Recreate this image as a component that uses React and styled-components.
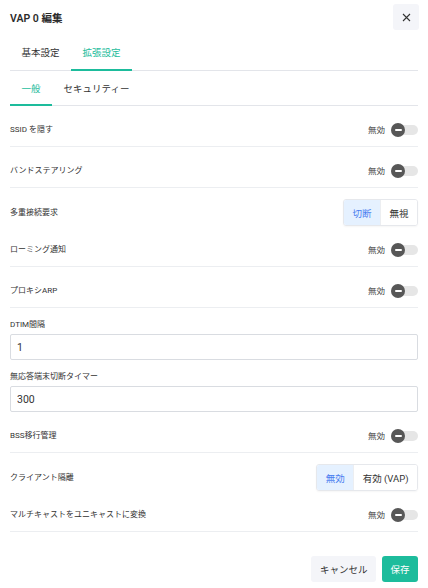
import React from "react";
import styled, { createGlobalStyle } from "styled-components";

const GlobalStyle = createGlobalStyle`
  html, body {
    margin: 0;
    padding: 0;
    background: #fff;
  }
  body {
    font-family: Roboto, "Noto Sans CJK JP", sans-serif;
    color: #333;
  }
  * {
    box-sizing: border-box;
  }
`;

const teal = "#1dbc9c";

const Panel = styled.div`
  width: 428px;
  padding: 0 10px;
`;

const Header = styled.div`
  height: 34px;
  display: flex;
  align-items: center;
  justify-content: space-between;
`;

const Title = styled.h2`
  margin: 0;
  font-size: 10.5px;
  font-weight: 600;
  color: #2b2b2b;
`;

const CloseButton = styled.button`
  width: 26px;
  height: 26px;
  margin-right: -1px;
  border: none;
  border-radius: 3px;
  background: #f4f5f9;
  display: flex;
  align-items: center;
  justify-content: center;
  padding: 0;
  cursor: pointer;
`;

const TabBar = styled.div`
  display: flex;
  border-bottom: 1px solid #e3e5ea;
`;

const Tab = styled.div`
  height: ${(p) => p.$height}px;
  padding: 0 11.5px;
  display: flex;
  align-items: center;
  font-size: 9.5px;
  color: ${(p) => (p.$active ? teal : "#333")};
  border-bottom: 2px solid ${(p) => (p.$active ? teal : "transparent")};
  margin-bottom: -1px;
  cursor: pointer;
`;

const Row = styled.div`
  display: flex;
  align-items: center;
  justify-content: space-between;
  height: ${(p) => (p.$plain ? "38px" : "41px")};
  padding: ${(p) => (p.$plain ? "11px 0 0" : "13px 0 5px")};
  border-bottom: ${(p) => (p.$plain ? "none" : "1px solid #eceef1")};
`;

const Label = styled.span`
  font-size: 8px;
  line-height: 12px;
  color: #333;
`;

const SwitchWrap = styled.div`
  display: flex;
  align-items: center;
  gap: 6px;
`;

const Status = styled.span`
  font-size: 8.5px;
  line-height: 12px;
  color: #444;
`;

const Track = styled.div`
  position: relative;
  width: 27px;
  height: 10px;
  border-radius: 5px;
  background: #e6e6e6;
`;

const Knob = styled.div`
  position: absolute;
  left: 0;
  top: -2px;
  width: 14px;
  height: 14px;
  border-radius: 50%;
  background: #575757;
  display: flex;
  align-items: center;
  justify-content: center;

  &::after {
    content: "";
    width: 7px;
    height: 2px;
    background: #fff;
    border-radius: 1px;
  }
`;

const Segmented = styled.div`
  display: inline-flex;
  height: 27px;
  border: 1px solid #e6e8ec;
  border-radius: 3px;
  overflow: hidden;
  box-shadow: 0 1px 2px rgba(0, 0, 0, 0.04);
`;

const SegItem = styled.div`
  padding: 0 8.5px;
  display: flex;
  align-items: center;
  font-size: 9.5px;
  color: ${(p) => (p.$active ? "#4a7ef0" : "#333")};
  background: ${(p) => (p.$active ? "#e5f1ff" : "#fff")};
  & + & {
    border-left: 1px solid #eceef1;
  }
`;

const Field = styled.div`
  padding-top: 10px;
`;

const FieldLabel = styled.div`
  font-size: 8px;
  line-height: 14px;
  margin-bottom: 2px;
  color: #333;
`;

const Input = styled.input`
  display: block;
  width: 100%;
  height: 26px;
  border: 1px solid #d9dce1;
  border-radius: 2px;
  padding: 0 6px;
  font-family: Roboto, sans-serif;
  font-size: 10.5px;
  color: #333;
  outline: none;
`;

const Footer = styled.div`
  display: flex;
  justify-content: flex-end;
  gap: 6px;
  padding-top: 24px;
`;

const Button = styled.button`
  height: 26px;
  padding: 0 8.5px;
  border: none;
  border-radius: 3px;
  font-family: Roboto, "Noto Sans CJK JP", sans-serif;
  font-size: 9.5px;
  color: ${(p) => (p.$primary ? "#fff" : "#333")};
  background: ${(p) => (p.$primary ? teal : "#f4f5f9")};
  cursor: pointer;
`;

function Toggle() {
  return (
    <SwitchWrap>
      <Status>無効</Status>
      <Track>
        <Knob />
      </Track>
    </SwitchWrap>
  );
}

function SwitchRow({ label }) {
  return (
    <Row>
      <Label>{label}</Label>
      <Toggle />
    </Row>
  );
}

function ChoiceRow({ label, options, active }) {
  return (
    <Row $plain>
      <Label>{label}</Label>
      <Segmented>
        {options.map((o, i) => (
          <SegItem key={o} $active={i === active}>
            {o}
          </SegItem>
        ))}
      </Segmented>
    </Row>
  );
}

export default function App() {
  return (
    <Panel>
      <GlobalStyle />
      <Header>
        <Title>VAP 0 編集</Title>
        <CloseButton aria-label="閉じる">
          <svg width="9" height="9" viewBox="0 0 9 9">
            <path d="M1 1L8 8M8 1L1 8" stroke="#333" strokeWidth="1.1" />
          </svg>
        </CloseButton>
      </Header>

      <TabBar>
        <Tab $height={37}>基本設定</Tab>
        <Tab $height={37} $active>
          拡張設定
        </Tab>
      </TabBar>

      <TabBar>
        <Tab $height={35} $active>
          一般
        </Tab>
        <Tab $height={35}>セキュリティー</Tab>
      </TabBar>

      <SwitchRow label="SSID を隠す" />
      <SwitchRow label="バンドステアリング" />
      <ChoiceRow label="多重接続要求" options={["切断", "無視"]} active={0} />
      <SwitchRow label="ローミング通知" />
      <SwitchRow label="プロキシARP" />

      <Field>
        <FieldLabel>DTIM間隔</FieldLabel>
        <Input defaultValue="1" />
      </Field>
      <Field>
        <FieldLabel>無応答端末切断タイマー</FieldLabel>
        <Input defaultValue="300" />
      </Field>

      <SwitchRow label="BSS移行管理" />
      <ChoiceRow label="クライアント隔離" options={["無効", "有効 (VAP)"]} active={0} />
      <SwitchRow label="マルチキャストをユニキャストに変換" />

      <Footer>
        <Button>キャンセル</Button>
        <Button $primary>保存</Button>
      </Footer>
    </Panel>
  );
}
